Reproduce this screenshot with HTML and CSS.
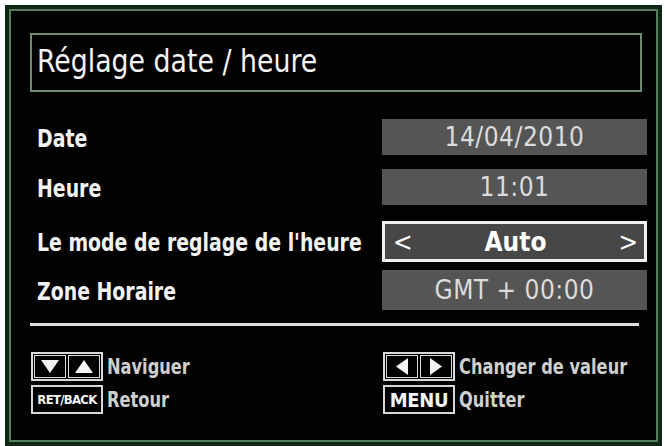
FILE: index.html
```html
<!DOCTYPE html>
<html lang="fr">
<head>
<meta charset="utf-8">
<title>Réglage date / heure</title>
<link rel="stylesheet" href="styles.css">
</head>
<body>
<div class="screen">
  <div class="title-box"><h1 class="title"><span class="squeeze">Réglage date / heure</span></h1></div>
  <div class="rows">
    <div class="row r-date"><span class="label"><span class="squeeze">Date</span></span><span class="value">14/04/2010</span></div>
    <div class="row r-time"><span class="label"><span class="squeeze">Heure</span></span><span class="value">11:01</span></div>
    <div class="row r-mode"><span class="label"><span class="squeeze">Le mode de reglage de l'heure</span></span><span class="value selected"><span class="arr">&lt;</span><span class="sel-text">Auto</span><span class="arr">&gt;</span></span></div>
    <div class="row r-zone"><span class="label"><span class="squeeze">Zone Horaire</span></span><span class="value">GMT + 00:00</span></div>
  </div>
  <div class="sep"></div>
  <div class="footer">
    <div class="hint">
      <span class="key pair">
        <span class="cell"><svg viewBox="0 0 20 15" class="tri"><polygon points="1,1 19,1 10,14" /></svg></span>
        <span class="cell"><svg viewBox="0 0 20 15" class="tri"><polygon points="1,14 19,14 10,1" /></svg></span>
      </span>
      <span class="htext"><span class="squeeze">Naviguer</span></span>
    </div>
    <div class="hint">
      <span class="key pair">
        <span class="cell"><svg viewBox="0 0 14 19" class="tri-h"><polygon points="13,1 13,18 1,9.5" /></svg></span>
        <span class="cell"><svg viewBox="0 0 14 19" class="tri-h"><polygon points="1,1 1,18 13,9.5" /></svg></span>
      </span>
      <span class="htext"><span class="squeeze">Changer de valeur</span></span>
    </div>
    <div class="hint">
      <span class="key word small">RET/BACK</span>
      <span class="htext"><span class="squeeze">Retour</span></span>
    </div>
    <div class="hint">
      <span class="key word">MENU</span>
      <span class="htext"><span class="squeeze">Quitter</span></span>
    </div>
  </div>
</div>
</body>
</html>
```

FILE: styles.css
```css
html, body {
  margin: 0;
  padding: 0;
  background: #ffffff;
}

body {
  font-family: "DejaVu Sans Condensed", "DejaVu Sans", sans-serif;
  overflow: hidden;
}

.squeeze {
  display: inline-block;
  white-space: nowrap;
  transform-origin: left center;
}

.screen {
  box-sizing: border-box;
  margin: 5px 0 0 5px;
  width: 657px;
  height: 441px;
  background: #020202;
  border: 4px solid #0f2616;
  box-shadow: inset 0 0 0 2px #527f5a;
  padding: 24px 11px 0 21px;
  overflow: hidden;
}

.title-box {
  box-sizing: border-box;
  height: 59px;
  margin-right: 5px;
  border: 2px solid #6f8c73;
  display: flex;
  align-items: center;
  padding-left: 5px;
}

.title {
  margin: 0;
  font-weight: normal;
  font-size: 32px;
  color: #f4f4f4;
  padding-bottom: 3px;
}

.title .squeeze {
  transform: scaleX(0.93);
}

.rows {
  margin-top: 27px;
  display: flex;
  flex-direction: column;
}

.row {
  display: flex;
  align-items: center;
}

.label {
  flex: 1;
  min-width: 0;
  padding-left: 7px;
  padding-top: 2px;
  font-weight: bold;
  font-size: 25px;
  color: #f2f2f2;
}

.label .squeeze {
  transform: scaleX(0.84);
}

.value {
  box-sizing: border-box;
  flex-shrink: 0;
  width: 265px;
  height: 100%;
  background: #555555;
  color: #dcdcdc;
  font-size: 26px;
  display: flex;
  align-items: center;
  justify-content: center;
  letter-spacing: 0.5px;
}

.r-date { height: 36px; }
.r-time { height: 36px; margin-top: 14px; }
.r-mode { height: 41px; margin-top: 16px; }
.r-zone { height: 40px; margin-top: 8px; }

.value.selected {
  background: #474747;
  border: 3px solid #f0f0f0;
  justify-content: space-between;
  padding: 0 6px 0 8px;
  color: #ffffff;
  letter-spacing: 0;
}

.sel-text {
  font-weight: bold;
}

.arr {
  font-size: 26px;
}

.sep {
  margin-top: 13px;
  margin-right: 8px;
  height: 3px;
  background: #dedede;
}

.footer {
  margin-top: 26px;
  margin-left: 1px;
  display: grid;
  grid-template-columns: 352px minmax(0, 1fr);
  row-gap: 4px;
}

.hint {
  display: flex;
  align-items: center;
  gap: 4px;
  height: 29px;
}

.key {
  box-sizing: border-box;
  flex-shrink: 0;
  width: 72px;
  height: 29px;
  border: 2px solid #d8d8d8;
  display: flex;
  align-items: stretch;
}

.key.pair {
  padding: 1px;
  gap: 2px;
}

.cell {
  flex: 1;
  border: 1px solid #d8d8d8;
  display: flex;
  align-items: center;
  justify-content: center;
}

.tri {
  width: 20px;
  height: 15px;
  fill: #f4f4f4;
}

.tri-h {
  width: 14px;
  height: 19px;
  fill: #f4f4f4;
}

.key.word {
  align-items: center;
  justify-content: center;
  font-weight: bold;
  color: #f4f4f4;
  font-size: 20px;
  letter-spacing: -0.3px;
}

.key.word.small {
  font-size: 13px;
  letter-spacing: -0.7px;
}

.htext {
  min-width: 0;
  font-weight: bold;
  font-size: 22px;
  color: #cfcfcf;
}

.htext .squeeze {
  transform: scaleX(0.82);
}
```
